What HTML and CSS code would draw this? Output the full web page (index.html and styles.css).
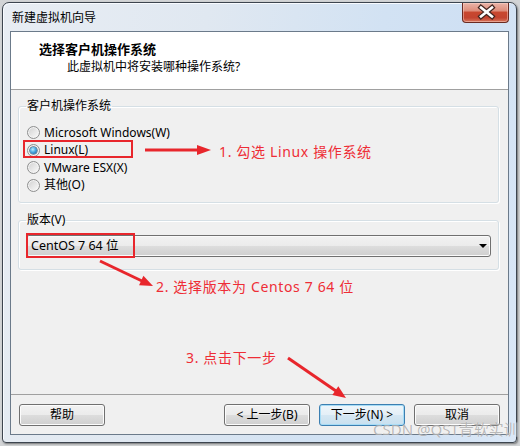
FILE: index.html
```html
<!DOCTYPE html>
<html lang="zh-CN">
<head>
<meta charset="utf-8">
<title>新建虚拟机向导</title>
<link rel="stylesheet" href="styles.css">
</head>
<body>
<div class="window">
  <div class="titlebar">
    <span class="title">新建虚拟机向导</span>
    <div class="close" aria-label="关闭">
      <svg width="47" height="19" viewBox="0 0 47 19">
        <path d="M18 4.5 L29 13.5 M29 4.5 L18 13.5" stroke="#43251f" stroke-width="5" stroke-linecap="square"/>
        <path d="M18 4.5 L29 13.5 M29 4.5 L18 13.5" stroke="#ffffff" stroke-width="2.6" stroke-linecap="square"/>
      </svg>
    </div>
  </div>
  <div class="client">
    <div class="header">
      <div class="h-title">选择客户机操作系统</div>
      <div class="h-sub">此虚拟机中将安装哪种操作系统?</div>
    </div>
    <div class="main">
      <div class="content">
        <fieldset class="group g-os">
          <legend>客户机操作系统</legend>
          <label class="radio"><span class="rb"></span>Microsoft Windows(W)</label>
          <label class="radio"><span class="rb on"></span>Linux(L)</label>
          <label class="radio"><span class="rb"></span>VMware ESX(X)</label>
          <label class="radio"><span class="rb"></span>其他(O)</label>
        </fieldset>
        <fieldset class="group g-ver">
          <legend>版本(V)</legend>
          <div class="combo"><span>CentOS 7 64 位</span><span class="caret"></span></div>
        </fieldset>
      </div>
      <div class="footer">
        <button class="btn">帮助</button>
        <span class="spacer"></span>
        <button class="btn">&lt; 上一步(B)</button>
        <button class="btn default">下一步(N) &gt;</button>
        <button class="btn">取消</button>
      </div>
    </div>
  </div>
</div>
<div class="overlay">
  <svg class="marks" width="520" height="446" viewBox="0 0 520 446">
    <rect x="24" y="141" width="108" height="16" fill="none" stroke="#e8262c" stroke-width="2"/>
    <rect x="27" y="234" width="107" height="23" fill="none" stroke="#e8262c" stroke-width="2"/>
    <g fill="#e8262c" stroke="#e8262c">
      <line x1="145" y1="150" x2="199" y2="150" stroke-width="3"/>
      <polygon points="197,145 211,150 197,155" stroke="none"/>
      <line x1="100" y1="261" x2="142" y2="281" stroke-width="3"/>
      <polygon points="139.1,285.2 153,286 143.4,275.8" stroke="none"/>
      <line x1="288" y1="358" x2="336" y2="391" stroke-width="3"/>
      <polygon points="332.3,394.9 346,398 338.3,386.3" stroke="none"/>
    </g>
  </svg>
  <span class="note n1">1. 勾选 Linux 操作系统</span>
  <span class="note n2">2. 选择版本为 Centos 7 64 位</span>
  <span class="note n3">3. 点击下一步</span>
  <span class="watermark">CSDN @QST青软实训</span>
</div>
</body>
</html>
```
FILE: styles.css
```css
* { box-sizing: border-box; }
html, body { margin: 0; padding: 0; }
body {
  width: 520px;
  height: 446px;
  padding: 2px 3px 3px 2px;
  background: #d2d4d6;
  font-family: "Noto Sans", "Noto Sans CJK SC", sans-serif;
  font-size: 12px;
  color: #000;
  position: relative;
  overflow: hidden;
}
.window {
  width: 515px;
  height: 441px;
  border: 1px solid #3d454f;
  border-radius: 7px 7px 4px 4px;
  background: linear-gradient(100deg, #e8edf3 0%, #e0e8f1 35%, #d2e2f3 65%, #cfe0f3 80%, #dbe8f7 100%);
  box-shadow: inset 1px 1px 0 #f8fbff, 1px 1px 2px rgba(0, 0, 0, 0.45);
  display: flex;
  flex-direction: column;
  padding: 0 7px 7px 7px;
}
.titlebar {
  height: 28px;
  display: flex;
  justify-content: space-between;
  align-items: flex-start;
}
.title {
  margin: 7px 0 0 2px;
  line-height: 16px;
  font-size: 12px;
}
.close {
  width: 47px;
  height: 20px;
  border: 1px solid #6a2a21;
  border-top: none;
  border-radius: 0 0 4px 4px;
  background: linear-gradient(#eab4a8 0%, #de8e7c 40%, #c8472f 50%, #c34430 78%, #d8775d 100%);
  box-shadow: inset 0 0 0 1px rgba(255, 220, 210, 0.45);
}
.close svg { display: block; }
.client {
  flex: 1;
  border: 1px solid #6b7a8a;
  background: #f0f0f0;
  display: flex;
  flex-direction: column;
}
.header {
  height: 58px;
  background: #fff;
  border-bottom: 1px solid #a0a0a0;
  padding: 8px 0 0 28px;
}
.h-title {
  font-weight: bold;
  font-size: 13px;
  line-height: 18px;
}
.h-sub {
  margin: 1px 0 0 28px;
  line-height: 16px;
}
.main {
  flex: 1;
  display: flex;
  flex-direction: column;
}
.content {
  flex: 1;
  padding: 9px 9px 0 7px;
}
.group {
  margin: 0;
  min-width: 0;
  border: 1px solid #d5dfe5;
  border-radius: 3px;
  box-shadow: inset 1px 1px 0 #fff, 1px 1px 0 #fff;
}
.group legend {
  line-height: 14px;
  padding: 0 1px;
}
.g-os { padding: 11px 8px 8px 8px; }
.g-os legend { margin-left: -1px; }
.g-ver { margin-top: 10px; padding: 8px 7px 12px 7px; }
.radio {
  display: flex;
  align-items: center;
  height: 17.5px;
  line-height: 16px;
}
.rb {
  position: relative;
  width: 13px;
  height: 13px;
  flex: none;
  border-radius: 50%;
  border: 1px solid #8e8f8f;
  background: linear-gradient(135deg, #cfcfcf 0%, #e6e6e6 50%, #fbfbfb 100%);
  box-shadow: inset 0 0 0 1px #f4f4f4;
  margin-right: 4px;
}
.rb.on::after {
  content: "";
  position: absolute;
  left: 2px;
  top: 2px;
  width: 7px;
  height: 7px;
  border-radius: 50%;
  background: radial-gradient(circle at 40% 35%, #bdf0ff 0%, #4aa8e0 45%, #14528a 100%);
  box-shadow: 0 0 0 0.5px #1d4466;
}
.combo {
  display: flex;
  align-items: center;
  justify-content: space-between;
  height: 22px;
  border: 1px solid #707070;
  border-radius: 3px;
  background: linear-gradient(#f2f2f2 0%, #ebebeb 50%, #dddddd 50%, #cfcfcf 100%);
  box-shadow: inset 0 0 0 1px #fafafa;
  padding: 0 3px 0 4px;
  line-height: 16px;
  font-size: 12.5px;
}
.caret {
  width: 0;
  height: 0;
  border-left: 4px solid transparent;
  border-right: 4px solid transparent;
  border-top: 4px solid #000;
}
.footer {
  height: 40px;
  border-top: 1px solid #a0a0a0;
  padding: 9px 8px 8px 8px;
  display: flex;
  gap: 9px;
}
.spacer { flex: 1; }
.btn {
  width: 86px;
  height: 22px;
  border: 1px solid #707070;
  border-radius: 3px;
  background: linear-gradient(#f2f2f2 0%, #ebebeb 50%, #dddddd 50%, #cfcfcf 100%);
  box-shadow: inset 0 0 0 1px #fcfcfc;
  font-family: inherit;
  font-size: 12px;
  line-height: 18px;
  padding: 0;
  color: #000;
}
.btn.default {
  border-color: #3c7fb1;
  background: linear-gradient(#eef6fb 0%, #e4eff7 50%, #d5e7f3 50%, #c8e0ef 100%);
  box-shadow: inset 0 0 0 1px #a6dcf6;
}
.overlay {
  position: absolute;
  left: 0;
  top: 0;
  width: 520px;
  height: 446px;
  pointer-events: none;
}
.marks { position: absolute; left: 0; top: 0; }
.note {
  position: absolute;
  color: #ee2d36;
  font-size: 14px;
  line-height: 18px;
  letter-spacing: 0.65px;
  white-space: nowrap;
}
.n1 { left: 219px; top: 143px; }
.n2 { left: 156px; top: 278px; }
.n3 { left: 186px; top: 349px; }
.watermark {
  position: absolute;
  left: 373px;
  top: 420px;
  font-size: 15px;
  line-height: 18px;
  color: rgba(140, 140, 140, 0.6);
  text-shadow: 0 0 1px rgba(255, 255, 255, 0.8);
  white-space: nowrap;
}
```
